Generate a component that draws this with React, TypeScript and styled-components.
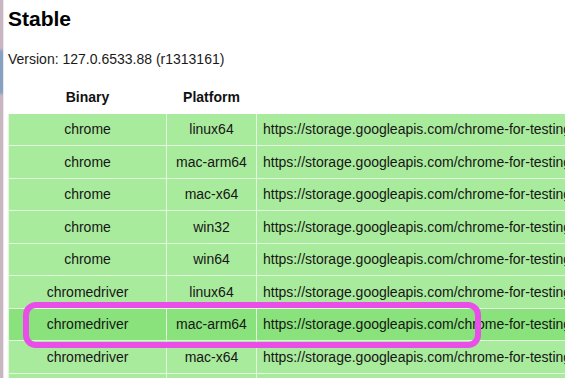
import styled, { createGlobalStyle } from "styled-components";

const GlobalStyle = createGlobalStyle`
  html, body {
    margin: 0;
    padding: 0;
    background: #ffffff;
    overflow: hidden;
  }
  body {
    font-family: "Liberation Sans", Arial, sans-serif;
    color: #111111;
  }
`;

const Page = styled.div`
  display: flex;
  min-height: 378px;
`;

// window edge showing behind the page
const EdgeStrip = styled.div`
  flex: 0 0 3px;
  background: linear-gradient(
    to bottom,
    #c8b7c1 0px,
    #c8b7c1 48px,
    #86a2c2 52px,
    #86a2c2 92px,
    #c8b7c1 96px,
    #c8b7c1 100%
  );
  border-right: 1px solid #ece5ea;
`;

const Content = styled.div`
  padding: 7px 0 0 4px;
  flex: 1;
  min-width: 0;
`;

const Title = styled.h2`
  margin: 0;
  font-size: 21px;
  line-height: 24px;
  font-weight: 700;
  color: #000000;
`;

const Version = styled.p`
  margin: 20px 0 0;
  font-size: 14px;
  line-height: 16px;
  color: #1a1a1a;
`;

const TableWrap = styled.div`
  position: relative;
  margin-top: 14px;
`;

const Table = styled.table`
  border-collapse: collapse;
  table-layout: fixed;
  width: 1010px;
  font-size: 14px;
  line-height: 16px;
`;

const HeadCell = styled.th<{ $width: number }>`
  box-sizing: border-box;
  width: ${(p) => p.$width}px;
  height: 31.5px;
  padding: 0 6px;
  font-weight: 700;
  text-align: center;
  color: #111111;
  border: 1px solid #ffffff;
`;

const Row = styled.tr<{ $highlight?: boolean }>`
  background: ${(p) => (p.$highlight ? "#89e27b" : "#a9eb9c")};
`;

const Cell = styled.td<{ $align?: "left" | "center" }>`
  height: 31.5px;
  padding: 0 6px;
  text-align: ${(p) => p.$align ?? "center"};
  white-space: nowrap;
  overflow: hidden;
  border: 1px solid #e4f6df;
  color: #161616;
`;

const Callout = styled.div`
  position: absolute;
  left: 15px;
  top: 221px;
  width: 458px;
  height: 46px;
  box-sizing: border-box;
  border: 6.5px solid #e94ee9;
  border-radius: 13px;
  pointer-events: none;
`;

const version = "127.0.6533.88";
const base = `https://storage.googleapis.com/chrome-for-testing-public/${version}`;

const downloads: { binary: string; platform: string }[] = [
  { binary: "chrome", platform: "linux64" },
  { binary: "chrome", platform: "mac-arm64" },
  { binary: "chrome", platform: "mac-x64" },
  { binary: "chrome", platform: "win32" },
  { binary: "chrome", platform: "win64" },
  { binary: "chromedriver", platform: "linux64" },
  { binary: "chromedriver", platform: "mac-arm64" },
  { binary: "chromedriver", platform: "mac-x64" },
  { binary: "chromedriver", platform: "win32" },
  { binary: "chromedriver", platform: "win64" },
];

const App = () => {
  return (
    <>
      <GlobalStyle />
      <Page>
        <EdgeStrip />
        <Content>
          <Title>Stable</Title>
          <Version>Version: {version} (r1313161)</Version>
          <TableWrap>
            <Table>
              <thead>
                <tr>
                  <HeadCell $width={158}>Binary</HeadCell>
                  <HeadCell $width={90}>Platform</HeadCell>
                  <HeadCell $width={762}>URL</HeadCell>
                </tr>
              </thead>
              <tbody>
                {downloads.map((d) => (
                  <Row
                    key={`${d.binary}-${d.platform}`}
                    $highlight={
                      d.binary === "chromedriver" && d.platform === "mac-arm64"
                    }
                  >
                    <Cell>{d.binary}</Cell>
                    <Cell>{d.platform}</Cell>
                    <Cell $align="left">
                      {`${base}/${d.platform}/${d.binary}-${d.platform}.zip`}
                    </Cell>
                  </Row>
                ))}
              </tbody>
            </Table>
            <Callout />
          </TableWrap>
        </Content>
      </Page>
    </>
  );
};

export default App;
